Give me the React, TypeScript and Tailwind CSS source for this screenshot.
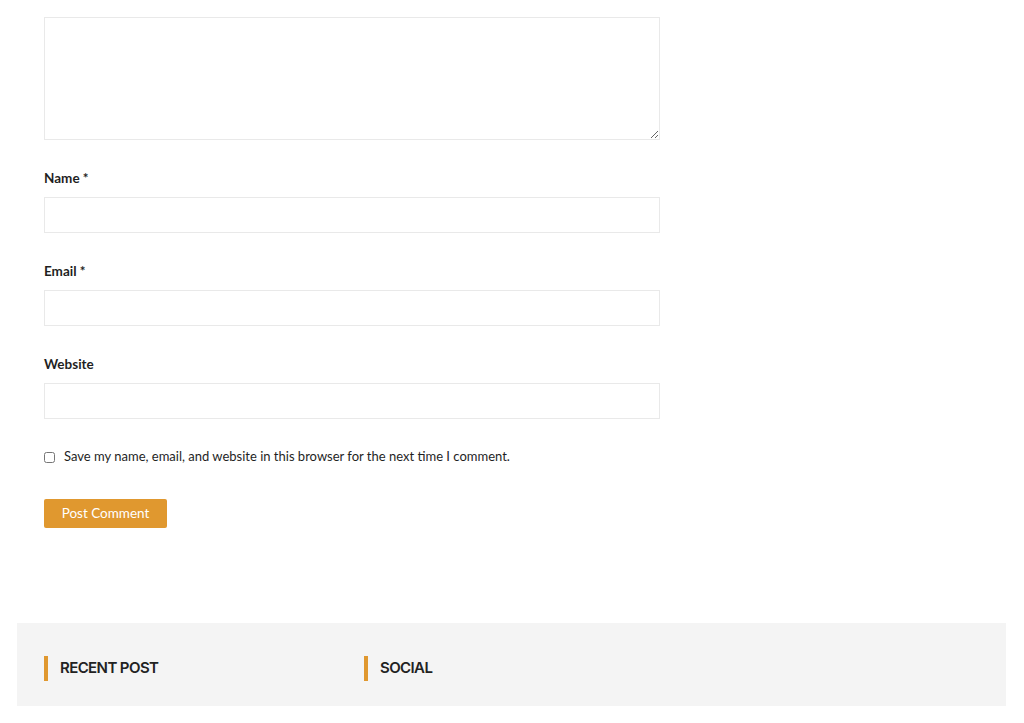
import React from 'react';

const fieldClass =
  'block w-[616px] h-[36px] border border-[#e9e9e9] bg-white px-3 text-[13px] outline-none';

const Field: React.FC<{ label: string; required?: boolean; type?: string }> = ({
  label,
  required,
  type = 'text',
}) => (
  <div className="mt-[28px]">
    <label className="block text-[13.5px] leading-[20px] font-bold text-[#1f1f1f]">
      {label}
      {required && ' *'}
    </label>
    <input type={type} className={`mt-[9px] ${fieldClass}`} />
  </div>
);

const WidgetTitle: React.FC<{ title: string }> = ({ title }) => (
  <div className="flex items-center h-[25px] border-l-[4px] border-[#e0982f] pl-3">
    <h3
      className="text-[15px] font-semibold text-[#222] tracking-[-0.6px]"
      style={{ fontFamily: 'Inter, sans-serif' }}
    >
      {title}
    </h3>
  </div>
);

export default function App() {
  return (
    <div className="min-h-[723px] bg-white" style={{ fontFamily: 'Lato, "DejaVu Sans", sans-serif' }}>
      <form className="pl-[44px] pt-[17px]">
        <textarea className="block w-[616px] h-[123px] border border-[#e9e9e9] bg-white p-3 text-[13px] outline-none resize-y" />

        <Field label="Name" required />
        <Field label="Email" required type="email" />
        <Field label="Website" />

        <div className="mt-[28px] flex items-center h-[20px]">
          <input type="checkbox" className="w-[11px] h-[11px] m-0" />
          <span className="ml-[9px] text-[13px] text-[#1f1f1f]">
            Save my name, email, and website in this browser for the next time I comment.
          </span>
        </div>

        <button
          type="button"
          className="mt-[32px] h-[29px] w-[123px] rounded-[2px] bg-[#e0982f] text-[13.5px] text-white"
        >
          Post Comment
        </button>
      </form>

      <footer className="mx-[17px] mt-[95px] w-[989px] bg-[#f4f4f4] pt-[33px] pb-[25px] pl-[27px]">
        <div className="grid grid-cols-[320px_320px]">
          <WidgetTitle title="RECENT POST" />
          <WidgetTitle title="SOCIAL" />
        </div>
      </footer>
    </div>
  );
}
